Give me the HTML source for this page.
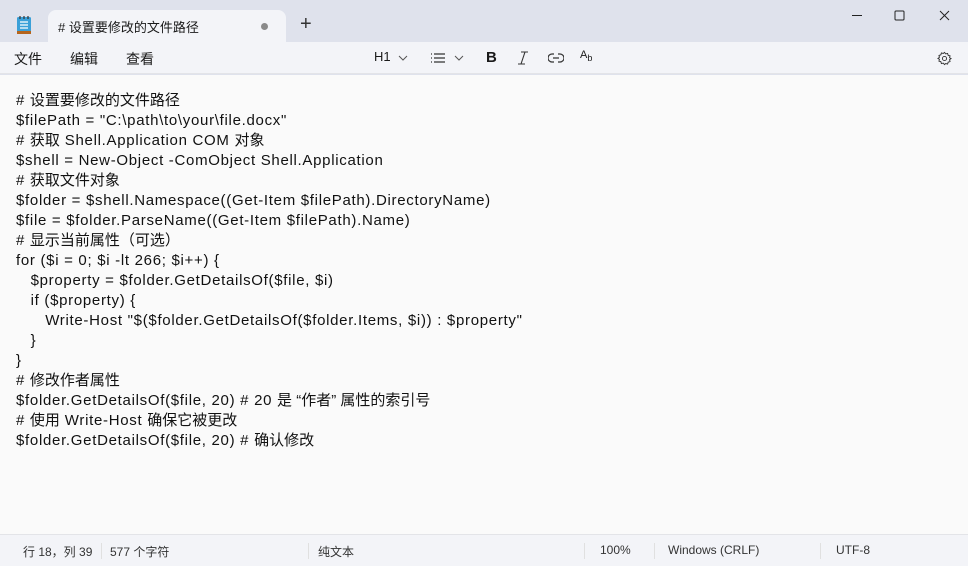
<!DOCTYPE html>
<html><head><meta charset="utf-8"><style>
*{margin:0;padding:0;box-sizing:border-box}
body{width:968px;height:566px;overflow:hidden;background:#dfe2ec;font-family:"Liberation Sans","Noto Sans CJK SC",sans-serif;position:relative;color:#1a1a1a}
.tab{position:absolute;left:48px;top:10px;width:238px;height:32px;background:#f3f4f8;border-radius:8px 8px 0 0;font-size:13px}
.tab span{position:absolute;left:10px;top:7px}
.dot{position:absolute;left:213px;top:13px;width:7px;height:7px;border-radius:50%;background:#8a8a8a}
.plus{position:absolute;left:300px;top:14px;font-size:20px;line-height:20px;color:#333;font-weight:300}
.bar{position:absolute;left:0;top:42px;width:968px;height:32px;background:#f3f4f8;border-bottom:1px solid #e3e4e8;font-size:14px}
.bar .m{position:absolute;top:7px}
.content{position:absolute;left:0;top:75px;width:968px;height:459px;background:#fafafa}
pre{position:absolute;left:16px;top:16px;font-family:"Liberation Sans","Noto Sans CJK SC",sans-serif;font-size:15px;letter-spacing:0.7px;line-height:20px;color:#111;white-space:pre}
pre i{font-style:normal;letter-spacing:0}
.status{position:absolute;left:0;top:534px;width:968px;height:32px;background:#f3f4f8;border-top:1px solid #e3e4e8;font-size:12px;color:#333}
.status span{position:absolute;top:8px}
.sep{position:absolute;top:8px;width:1px;height:16px;background:#e0e0e0}
svg{position:absolute}
</style></head><body>
<svg style="left:16px;top:15px" width="16" height="20" viewBox="0 0 16 20"><rect x="1" y="2" width="14" height="17" rx="1.5" fill="#3aa0d8"/><rect x="1" y="16" width="14" height="3" fill="#b5651d"/><path d="M4 7h8M4 10h8M4 13h8" stroke="#fff" stroke-width="1.2"/><path d="M4 1v3M8 1v3M12 1v3" stroke="#333" stroke-width="1.2"/></svg>
<div class="tab"><span># 设置要修改的文件路径</span><div class="dot"></div></div>
<div class="plus">+</div>
<svg style="left:848px;top:10px" width="110" height="12"><path d="M4 5.5h10" stroke="#222" stroke-width="1"/><rect x="47" y="1" width="9" height="9" fill="none" stroke="#222" rx="1"/><path d="M92 1l9 9M101 1l-9 9" stroke="#222"/></svg>
<div class="bar">
<span class="m" style="left:14px">文件</span><span class="m" style="left:70px">编辑</span><span class="m" style="left:126px">查看</span>
<span class="m" style="left:374px;font-size:13px">H1</span>
<svg style="left:398px;top:13px" width="10" height="6"><path d="M1 1l4 4 4-4" stroke="#555" fill="none"/></svg>
<svg style="left:430px;top:10px" width="16" height="12"><path d="M1 2h1M1 6h1M1 10h1M4 2h11M4 6h11M4 10h11" stroke="#333" stroke-width="1.2"/></svg>
<svg style="left:454px;top:13px" width="10" height="6"><path d="M1 1l4 4 4-4" stroke="#555" fill="none"/></svg>
<span class="m" style="left:486px;font-weight:bold;font-size:15px">B</span>
<svg style="left:516px;top:9px" width="14" height="14"><path d="M5 1h7M2 13h7M9 1L5 13" stroke="#333" stroke-width="1.1" fill="none"/></svg>
<svg style="left:548px;top:10px" width="16" height="12"><path d="M6 2H4a4 4 0 000 8h2M10 2h2a4 4 0 010 8h-2M5 6h6" stroke="#333" stroke-width="1.2" fill="none"/></svg>
<span class="m" style="left:580px;font-size:11px;top:7px">A<sub style="font-size:9px">b</sub></span>
<svg style="left:937px;top:9px" width="15" height="15" viewBox="0 0 16 16"><circle cx="8" cy="8" r="2.2" fill="none" stroke="#333"/><path d="M8 1.5l1.3 1.6 2-.5.6 2 2 .6-.5 2L15 8l-1.6 1.3.5 2-2 .6-.6 2-2-.5L8 14.5l-1.3-1.6-2 .5-.6-2-2-.6.5-2L1 8l1.6-1.3-.5-2 2-.6.6-2 2 .5z" fill="none" stroke="#333"/></svg>
</div>
<div class="content"><pre># <i>设置要修改的文件路径</i>
$filePath = "C:\path\to\your\file.docx"
# <i>获取</i> Shell.Application COM <i>对象</i>
$shell = New-Object -ComObject Shell.Application
# <i>获取文件对象</i>
$folder = $shell.Namespace((Get-Item $filePath).DirectoryName)
$file = $folder.ParseName((Get-Item $filePath).Name)
# <i>显示当前属性（可选）</i>
for ($i = 0; $i -lt 266; $i++) {
   $property = $folder.GetDetailsOf($file, $i)
   if ($property) {
      Write-Host "$($folder.GetDetailsOf($folder.Items, $i)) : $property"
   }
}
# <i>修改作者属性</i>
$folder.GetDetailsOf($file, 20) # 20 <i>是 “作者” 属性的索引号</i>
# <i>使用</i> Write-Host <i>确保它被更改</i>
$folder.GetDetailsOf($file, 20) # <i>确认修改</i></pre></div>
<div class="status">
<span style="left:23px">行 18，列 39</span><div class="sep" style="left:101px"></div>
<span style="left:110px">577 个字符</span><div class="sep" style="left:308px"></div>
<span style="left:318px">纯文本</span><div class="sep" style="left:584px"></div>
<span style="left:600px">100%</span><div class="sep" style="left:654px"></div>
<span style="left:668px">Windows (CRLF)</span><div class="sep" style="left:820px"></div>
<span style="left:836px">UTF-8</span>
</div>
</body></html>
